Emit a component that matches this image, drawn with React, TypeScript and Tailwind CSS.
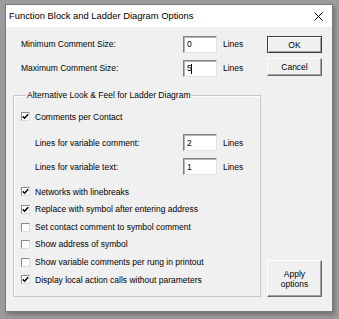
import React from "react";

const font = { fontFamily: '"Liberation Sans", Arial, sans-serif' };

function Edit({ value, caret }: { value: string; caret?: boolean }) {
  return (
    <div className="w-[34px] h-[17px] bg-white border-t border-l border-t-[#828282] border-l-[#828282] border-b border-r border-b-[#e3e3e3] border-r-[#e3e3e3] shadow-[inset_1px_1px_0_#b4b4b4] flex items-center pl-[3px] text-[8.5px] leading-none text-black">
      <span>{value}</span>
      {caret && <span className="w-px h-[10px] bg-black -ml-px" />}
    </div>
  );
}

function Check({ checked }: { checked: boolean }) {
  return (
    <div className="w-[9px] h-[9px] bg-white border-t border-l border-t-[#8a8a8a] border-l-[#8a8a8a] border-b border-r border-b-[#dcdcdc] border-r-[#dcdcdc] flex items-center justify-center shrink-0">
      {checked && (
        <svg width="7" height="7" viewBox="0 0 7 7">
          <polyline points="0.8,3.4 2.6,5.2 6.2,1.3" fill="none" stroke="#000" strokeWidth="1.5" />
        </svg>
      )}
    </div>
  );
}

function CheckRow({ checked, label }: { checked: boolean; label: string }) {
  return (
    <div className="h-[17.6px] flex items-center gap-[5px]">
      <Check checked={checked} />
      <span>{label}</span>
    </div>
  );
}

function Button({ children, def, className = "" }: { children: React.ReactNode; def?: boolean; className?: string }) {
  return (
    <div
      className={
        "w-[55px] flex items-center justify-center text-center bg-[#f0f0f0] text-[8.5px] leading-[10px] text-black " +
        (def
          ? "border border-[#3c3c3c] shadow-[inset_1px_1px_0_#ffffff,inset_-1px_-1px_0_#a0a0a0] "
          : "border-t border-l border-t-white border-l-white border-b border-r border-b-[#696969] border-r-[#696969] shadow-[inset_-1px_-1px_0_#a0a0a0] ") +
        className
      }
    >
      {children}
    </div>
  );
}

export default function App() {
  return (
    <div className="w-[339px] h-[319px] bg-[#9c9c9c] pt-[4px] pl-[5px] overflow-hidden" style={font}>
      <div className="w-[328px] h-[308px] border border-[#7a7a7a] flex flex-col shadow-[2px_3px_4px_rgba(0,0,0,0.25)]">
        <div className="h-[22px] bg-white flex items-center pl-[3px] pr-[9px] shrink-0">
          <span className="text-[9.4px] text-black leading-none">Function Block and Ladder Diagram Options</span>
          <svg className="ml-auto" width="9" height="9" viewBox="0 0 9 9">
            <path d="M0.5 0.5 L8.5 8.5 M8.5 0.5 L0.5 8.5" stroke="#000" strokeWidth="1" />
          </svg>
        </div>
        <div className="flex-1 bg-[#f0f0f0] flex pl-[7px] pt-[9px] pb-[14px] text-[8.5px] text-black leading-none">
          <div className="w-[248px] flex flex-col">
            <div className="h-[17px] flex items-center pl-[8px]">
              <span className="w-[162px]">Minimum Comment Size:</span>
              <Edit value="0" />
              <span className="ml-[6px]">Lines</span>
            </div>
            <div className="h-[17px] mt-[7px] flex items-center pl-[8px]">
              <span className="w-[162px]">Maximum Comment Size:</span>
              <Edit value="5" caret />
              <span className="ml-[6px]">Lines</span>
            </div>
            <fieldset className="mt-[13px] h-[207px] border border-[#c8c8c8] shadow-[inset_1px_1px_0_#ffffff] pl-[7px] pb-[7px]">
              <legend className="ml-[5px] px-[1px] leading-[11px]">Alternative Look &amp; Feel for Ladder Diagram</legend>
              <div className="mt-[7.2px]">
                <CheckRow checked label="Comments per Contact" />
              </div>
              <div className="mt-[8.7px] h-[17px] flex items-center pl-[14px]">
                <span className="w-[148px]">Lines for variable comment:</span>
                <Edit value="2" />
                <span className="ml-[6px]">Lines</span>
              </div>
              <div className="mt-[7px] h-[17px] flex items-center pl-[14px]">
                <span className="w-[148px]">Lines for variable text:</span>
                <Edit value="1" />
                <span className="ml-[6px]">Lines</span>
              </div>
              <div className="mt-[7.7px] flex flex-col">
                <CheckRow checked label="Networks with linebreaks" />
                <CheckRow checked label="Replace with symbol after entering address" />
                <CheckRow checked={false} label="Set contact comment to symbol comment" />
                <CheckRow checked={false} label="Show address of symbol" />
                <CheckRow checked={false} label="Show variable comments per rung in printout" />
                <CheckRow checked label="Display local action calls without parameters" />
              </div>
            </fieldset>
          </div>
          <div className="ml-[6px] w-[55px] flex flex-col">
            <Button def className="h-[17px]">OK</Button>
            <Button className="h-[18px] mt-[5px]">Cancel</Button>
            <Button className="h-[37px] mt-auto">
              Apply
              <br />
              options
            </Button>
          </div>
        </div>
      </div>
    </div>
  );
}
